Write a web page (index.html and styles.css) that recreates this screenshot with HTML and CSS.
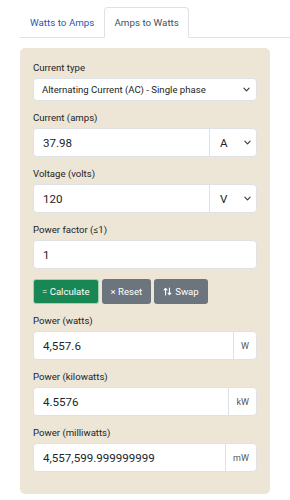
FILE: index.html
```html
<!DOCTYPE html>
<html>
<head>
  <meta charset="UTF-8">
  <title>Amps to Watts</title>
  <meta name="viewport" content="width=device-width, initial-scale=1.0">
  <link rel="stylesheet" href="styles.css">
</head>
<body>
  <ul class="tabs">
    <li><a href="#" class="tab">Watts to Amps</a></li>
    <li><a href="#" class="tab active">Amps to Watts</a></li>
  </ul>

  <div class="card">
    <label>Current type</label>
    <div class="select small">
      <span>Alternating Current (AC) - Single phase</span>
      <svg viewBox="0 0 16 16" width="7" height="7"><path d="M2 5l6 6 6-6" fill="none" stroke="#343a40" stroke-width="2.6" stroke-linecap="round" stroke-linejoin="round"/></svg>
    </div>

    <label>Current (amps)</label>
    <div class="group">
      <input type="text" value="37.98">
      <div class="select unit">
        <span>A</span>
        <svg viewBox="0 0 16 16" width="7" height="7"><path d="M2 5l6 6 6-6" fill="none" stroke="#343a40" stroke-width="2.6" stroke-linecap="round" stroke-linejoin="round"/></svg>
      </div>
    </div>

    <label>Voltage (volts)</label>
    <div class="group">
      <input type="text" value="120">
      <div class="select unit">
        <span>V</span>
        <svg viewBox="0 0 16 16" width="7" height="7"><path d="M2 5l6 6 6-6" fill="none" stroke="#343a40" stroke-width="2.6" stroke-linecap="round" stroke-linejoin="round"/></svg>
      </div>
    </div>

    <label>Power factor (≤1)</label>
    <div class="group">
      <input type="text" value="1">
    </div>

    <div class="buttons">
      <button class="btn green">= Calculate</button>
      <button class="btn gray">× Reset</button>
      <button class="btn gray">
        <svg viewBox="0 0 16 16" width="9" height="9"><path d="M4.5 14V2.5M2 5l2.5-2.5L7 5M11.5 2v11.5M9 11l2.5 2.5L14 11" fill="none" stroke="#fff" stroke-width="2" stroke-linecap="round" stroke-linejoin="round"/></svg>
        Swap
      </button>
    </div>

    <label>Power (watts)</label>
    <div class="group">
      <input type="text" value="4,557.6" readonly>
      <span class="addon">W</span>
    </div>

    <label>Power (kilowatts)</label>
    <div class="group">
      <input type="text" value="4.5576" readonly>
      <span class="addon">kW</span>
    </div>

    <label>Power (milliwatts)</label>
    <div class="group">
      <input type="text" value="4,557,599.999999999" readonly>
      <span class="addon">mW</span>
    </div>
  </div>
</body>
</html>
```

FILE: styles.css
```css
* {
  box-sizing: border-box;
}

body {
  margin: 0;
  padding: 7px 0 0 20px;
  font-family: Roboto, Lato, sans-serif;
  color: #212529;
  background: #fff;
}

.tabs {
  display: flex;
  list-style: none;
  margin: 0;
  padding: 0;
  border-bottom: 1px solid #dee2e6;
}

.tab {
  display: block;
  height: 31px;
  line-height: 30px;
  padding: 0 9px;
  font-size: 9.8px;
  color: #1f58b8;
  text-decoration: none;
  border: 1px solid transparent;
  border-radius: 4px 4px 0 0;
  margin-bottom: -1px;
}

.tab.active {
  color: #495057;
  background: #fff;
  border-color: #dee2e6 #dee2e6 #fff;
}

.card {
  margin: 10px 20px 0 0;
  padding: 12px 13px 13px;
  background: #ede6d6;
  border-radius: 5px;
}

label {
  display: block;
  font-size: 9.6px;
  line-height: 16px;
  margin-bottom: 2px;
}

.select {
  display: flex;
  align-items: center;
  justify-content: space-between;
  background: #fff;
  border: 1px solid #dee2e6;
  border-radius: 4px;
  color: #212529;
  white-space: nowrap;
}

.select.small {
  height: 23px;
  padding: 0 6px 0 8px;
  font-size: 9.6px;
  margin-bottom: 9px;
}

.group {
  display: flex;
  height: 29px;
  margin-bottom: 9px;
}

.group input {
  flex: 1;
  min-width: 0;
  height: 29px;
  padding: 0 9px;
  font-family: inherit;
  font-size: 11.6px;
  color: #212529;
  border: 1px solid #dee2e6;
  border-radius: 4px;
  background: #fff;
  outline: none;
}

.group input:not(:last-child) {
  border-radius: 4px 0 0 4px;
}

.select.unit {
  width: 48px;
  height: 29px;
  padding: 0 5px 0 10px;
  font-size: 11.6px;
  margin-left: -1px;
  border-radius: 0 4px 4px 0;
}

.addon {
  display: flex;
  align-items: center;
  padding: 0 7px;
  margin-left: -1px;
  font-size: 9px;
  color: #555;
  background: #fff;
  border: 1px solid #dee2e6;
  border-radius: 0 4px 4px 0;
}

.buttons {
  display: flex;
  gap: 3px;
  margin: 10px 0 9px;
}

.btn {
  display: flex;
  align-items: center;
  gap: 3px;
  height: 25px;
  padding: 0 8px;
  font-family: inherit;
  font-size: 9.6px;
  color: #fff;
  border: 1px solid transparent;
  border-radius: 3px;
}

.btn.green {
  background: #198754;
  border-color: #a3cfb4;
}

.btn.gray {
  background: #6c757d;
}
```
